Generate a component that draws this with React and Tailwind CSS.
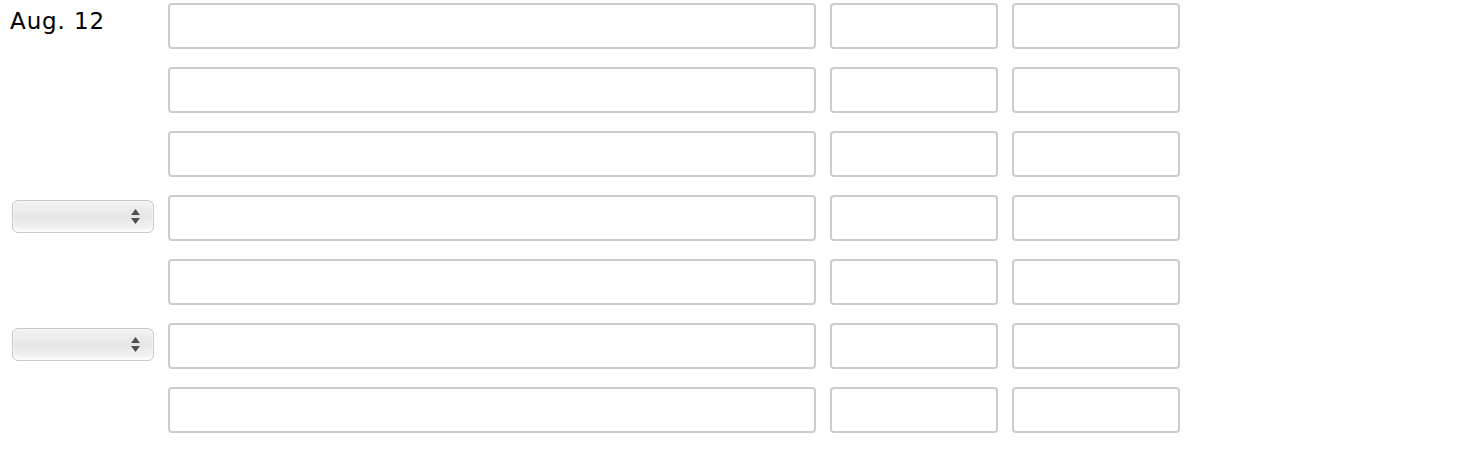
const rows = ['date', 'none', 'none', 'select', 'none', 'select', 'none'];

const FakeSelect = () => (
  <div className="ml-[12px] mt-[5px] self-start w-[142px] h-[33px] rounded-[6px] border border-[#c9c9c9] bg-gradient-to-b from-[#f3f3f3] via-[#e6e6e6] to-[#f6f6f6] shadow-[inset_0_-2px_3px_rgba(255,255,255,0.9)] flex items-center justify-end pr-[13px]">
    <svg width="9" height="15" viewBox="0 0 9 15">
      <polygon points="4.5,0 9,6 0,6" fill="#505050" />
      <polygon points="0,9 9,9 4.5,15" fill="#505050" />
    </svg>
  </div>
);

const Input = ({ width }) => (
  <input
    type="text"
    className={`${width} h-[46px] rounded-[4px] border-2 border-[#cccccc] bg-white outline-none`}
  />
);

export default function App() {
  return (
    <div className="bg-white w-[1472px] h-[460px] pt-[3px] font-['DejaVu_Sans',Verdana,sans-serif] text-black">
      <div className="flex flex-col gap-[18px]">
        {rows.map((kind, i) => (
          <div key={i} className="flex items-center">
            <div className="w-[168px] h-[46px] flex">
              {kind === 'date' && (
                <span className="pl-[10px] pt-[4px] text-[23px] leading-[28px] tracking-[0.9px]">Aug. 12</span>
              )}
              {kind === 'select' && <FakeSelect />}
            </div>
            <div className="flex gap-[14px]">
              <Input width="w-[648px]" />
              <Input width="w-[168px]" />
              <Input width="w-[168px]" />
            </div>
          </div>
        ))}
      </div>
    </div>
  );
}
